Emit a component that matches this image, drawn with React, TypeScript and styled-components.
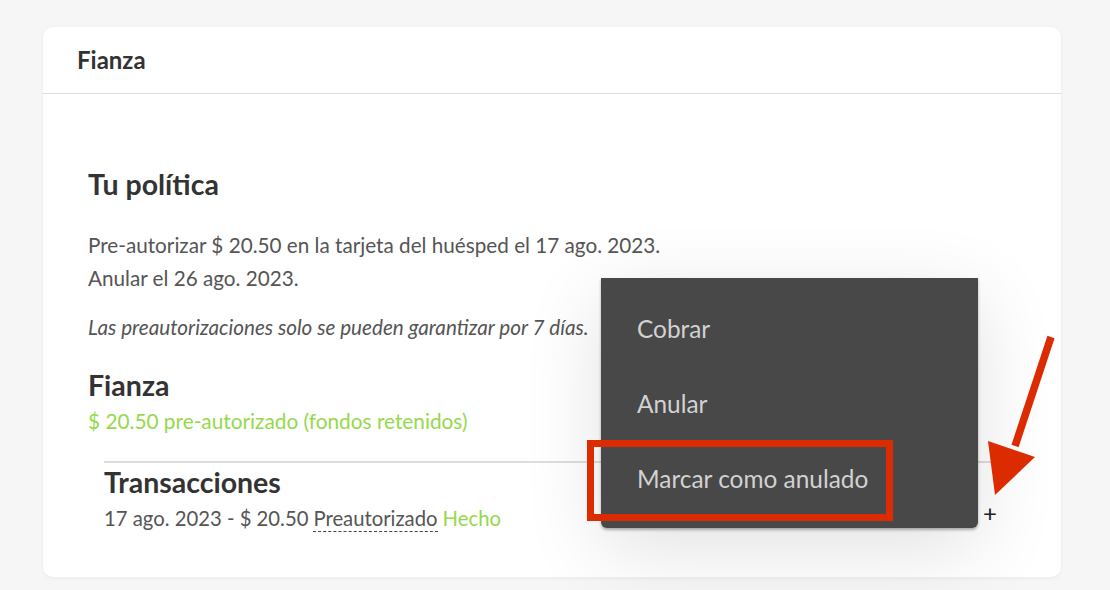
import React from 'react';
import styled, { createGlobalStyle } from 'styled-components';

const GlobalStyle = createGlobalStyle`
  html, body {
    margin: 0;
    padding: 0;
    background: #f6f6f6;
  }
  body {
    font-family: Lato, "Liberation Sans", sans-serif;
    color: #333;
  }
`;

const menuItems = ['Cobrar', 'Anular', 'Marcar como anulado'];

export default function App() {
  return (
    <>
      <GlobalStyle />
      <Page>
        <Card>
          <CardHeader>
            <CardTitle>Fianza</CardTitle>
          </CardHeader>
          <CardBody>
            <SectionTitle>Tu política</SectionTitle>
            <Paragraph>
              Pre-autorizar $ 20.50 en la tarjeta del huésped el 17 ago. 2023.
              <br />
              Anular el 26 ago. 2023.
            </Paragraph>
            <Note>
              Las preautorizaciones solo se pueden garantizar por 7 días.
            </Note>
            <SubTitle>Fianza</SubTitle>
            <Status>$ 20.50 pre-autorizado (fondos retenidos)</Status>
            <Transactions>
              <SubTitle>Transacciones</SubTitle>
              <TxRow>
                <span>17 ago. 2023 - $ 20.50</span>
                <Dotted>Preautorizado</Dotted>
                <Done>Hecho</Done>
                <PlusButton>+</PlusButton>
              </TxRow>
            </Transactions>
          </CardBody>
          <Menu>
            {menuItems.map((item) => (
              <MenuItem key={item}>{item}</MenuItem>
            ))}
          </Menu>
          <Highlight />
          <Arrow width="80" height="170" viewBox="0 0 80 170">
            <line x1="66" y1="3" x2="30" y2="112" stroke="#dc2b00" strokeWidth="7.5" />
            <polygon points="3,107 50,123 10,161" fill="#dc2b00" />
          </Arrow>
        </Card>
      </Page>
    </>
  );
}

const Page = styled.div`
  padding: 27px 49px 13px 43px;
`;

const Card = styled.div`
  position: relative;
  width: 1018px;
  height: 550px;
  background: #fff;
  border-radius: 10px;
  box-shadow: 0 1px 4px rgba(0, 0, 0, 0.06);
`;

const CardHeader = styled.header`
  height: 66px;
  display: flex;
  align-items: center;
  padding: 0 34px;
  border-bottom: 1px solid #dedede;
`;

const CardTitle = styled.h2`
  margin: 0 0 1px;
  font-size: 24px;
  font-weight: 700;
  color: #333;
`;

const CardBody = styled.div`
  display: flex;
  flex-direction: column;
  padding: 73px 45px 0;
`;

const SectionTitle = styled.h3`
  margin: 0 0 28px;
  font-size: 28.5px;
  line-height: 34px;
  font-weight: 700;
  color: #333;
`;

const Paragraph = styled.p`
  margin: 0 0 16px;
  font-size: 20.7px;
  line-height: 33px;
  color: #555;
`;

const Note = styled.p`
  margin: 0 0 24px;
  font-size: 20.7px;
  line-height: 33px;
  font-style: italic;
  color: #555;
`;

const SubTitle = styled.h4`
  margin: 0;
  font-size: 28.5px;
  line-height: 34px;
  font-weight: 700;
  color: #333;
`;

const Status = styled.div`
  font-size: 20.8px;
  line-height: 38px;
  color: #95d94c;
`;

const Transactions = styled.div`
  margin: 21px 0 0 16px;
  padding-top: 2px;
  width: 888px;
  border-top: 2px solid #ddd;
`;

const TxRow = styled.div`
  position: relative;
  display: flex;
  gap: 5px;
  padding-top: 1px;
  font-size: 20.3px;
  line-height: 36px;
  color: #555;
`;

const Dotted = styled.span`
  border-bottom: 1px dashed #444;
  line-height: 26px;
  align-self: center;
`;

const Done = styled.span`
  color: #95d94c;
`;

const PlusButton = styled.span`
  position: absolute;
  right: -5px;
  top: -4px;
  font-size: 24px;
  font-weight: 400;
  color: #222;
`;

const Menu = styled.ul`
  position: absolute;
  box-sizing: border-box;
  left: 558px;
  top: 251px;
  width: 377px;
  height: 250px;
  margin: 0;
  padding: 13px 0 0;
  list-style: none;
  background: #484848;
  border-radius: 0 0 6px 6px;
  box-shadow: 0 20px 80px rgba(0, 0, 0, 0.12), 0 2px 3px rgba(0, 0, 0, 0.3);
`;

const MenuItem = styled.li`
  height: 75px;
  display: flex;
  align-items: center;
  padding-left: 36px;
  font-size: 24.4px;
  color: #d2d2d2;
`;

const Highlight = styled.div`
  position: absolute;
  left: 544px;
  top: 413px;
  width: 292px;
  height: 67px;
  border: 7px solid #dc2b00;
`;

const Arrow = styled.svg`
  position: absolute;
  left: 942px;
  top: 307px;
`;
